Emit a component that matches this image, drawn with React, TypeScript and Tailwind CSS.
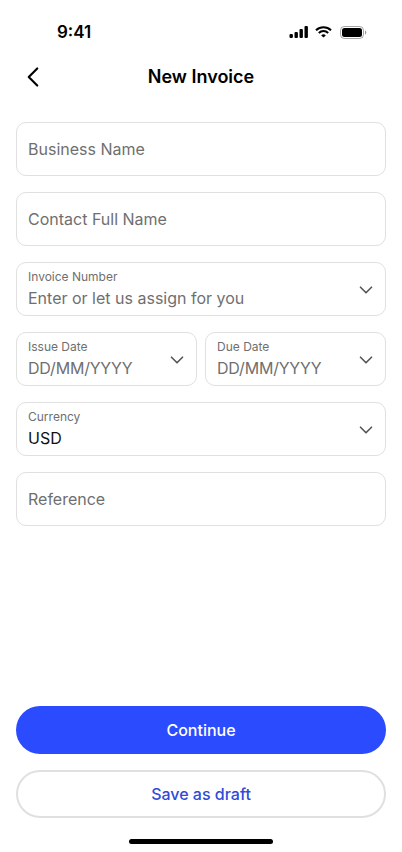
import React from "react";
import { ChevronDown, ChevronLeft } from "lucide-react";

const StatusBar = () => (
  <div className="h-[64px] flex items-start justify-between pt-[21px] pl-[57px] pr-[35px]">
    <span className="text-[17px] leading-[22px] font-semibold text-black">9:41</span>
    <div className="flex items-center h-[22px]">
      <svg width="20" height="12" viewBox="0 0 20 12" fill="#000" className="mr-[6px]">
        <rect x="0.5" y="8" width="3.4" height="4" rx="1" />
        <rect x="5.5" y="6" width="3.4" height="6" rx="1" />
        <rect x="10.5" y="3" width="3.4" height="9" rx="1" />
        <rect x="15.5" y="0" width="3.4" height="12" rx="1" />
      </svg>
      <svg width="17" height="12" viewBox="0 0 17 12" fill="none" stroke="#000" strokeWidth="2" className="mr-[8px]">
        <path d="M1 4.200a10.800 10.800 0 0 1 15 0" />
        <path d="M3.800 7a6.800 6.800 0 0 1 9.400 0" />
        <path d="M8.500 11.600 6.200 9.400a3.300 3.300 0 0 1 4.600 0z" fill="#000" stroke="none" />
      </svg>
      <svg width="27" height="13" viewBox="0 0 27 13" fill="none">
        <rect x="0.5" y="0.5" width="23" height="12" rx="3.800" stroke="#000" strokeOpacity="0.35" />
        <rect x="2" y="2" width="20" height="9" rx="2.500" fill="#000" />
        <path d="M25 4.500v4c.8-.3 1.300-1.100 1.300-2s-.5-1.700-1.300-2z" fill="#000" fillOpacity="0.4" />
      </svg>
    </div>
  </div>
);

const Field = ({ placeholder }: { placeholder: string }) => (
  <div className="h-[54px] rounded-[10px] border border-[#e0e0e0] px-[11px] flex items-center">
    <span className="text-[16px] leading-[22px] text-[#6f6f6f]">{placeholder}</span>
  </div>
);

const SelectField = ({
  label,
  value,
  dark,
  className = "",
  valueClass = "",
}: {
  label: string;
  value: string;
  dark?: boolean;
  className?: string;
  valueClass?: string;
}) => (
  <div className={`h-[54px] rounded-[10px] border border-[#e0e0e0] pl-[11px] pr-[8px] flex items-center justify-between ${className}`}>
    <div className="flex flex-col">
      <span className="text-[12px] leading-[16px] mb-[2px] text-[#6f6f6f]">{label}</span>
      <span className={`text-[16px] leading-[22px] ${valueClass} ${dark ? "text-[#111111]" : "text-[#6f6f6f]"}`}>{value}</span>
    </div>
    <ChevronDown size={22} strokeWidth={1.8} className="text-[#555555] shrink-0 mt-[1px]" />
  </div>
);

export default function App() {
  return (
    <div className="w-[402px] h-[852px] bg-white flex flex-col font-['Inter',sans-serif] overflow-hidden">
      <StatusBar />
      <div className="relative h-[26px] flex items-center justify-center">
        <ChevronLeft size={34} strokeWidth={1.5} className="absolute left-[16px] text-black" />
        <h1 className="text-[18px] leading-[26px] font-semibold text-black">New Invoice</h1>
      </div>
      <div className="flex-1 px-[16px] pt-[32px] flex flex-col gap-[16px]">
        <Field placeholder="Business Name" />
        <Field placeholder="Contact Full Name" />
        <SelectField label="Invoice Number" value="Enter or let us assign for you" />
        <div className="flex gap-[8px]">
          <SelectField label="Issue Date" value="DD/MM/YYYY" valueClass="tracking-[-0.2px]" className="flex-1" />
          <SelectField label="Due Date" value="DD/MM/YYYY" valueClass="tracking-[-0.2px]" className="flex-1" />
        </div>
        <SelectField label="Currency" value="USD" dark />
        <Field placeholder="Reference" />
      </div>
      <div className="px-[16px] flex flex-col gap-[16px]">
        <button className="h-[48px] rounded-full bg-[#2b4bff] text-white text-[16px] font-medium">Continue</button>
        <button className="h-[48px] rounded-full border-2 border-[#e0e0e0] text-[#2f4bd8] text-[16px] font-medium">Save as draft</button>
      </div>
      <div className="h-[34px] flex items-start justify-center pt-[21px]">
        <div className="w-[144px] h-[5px] rounded-full bg-black" />
      </div>
    </div>
  );
}
